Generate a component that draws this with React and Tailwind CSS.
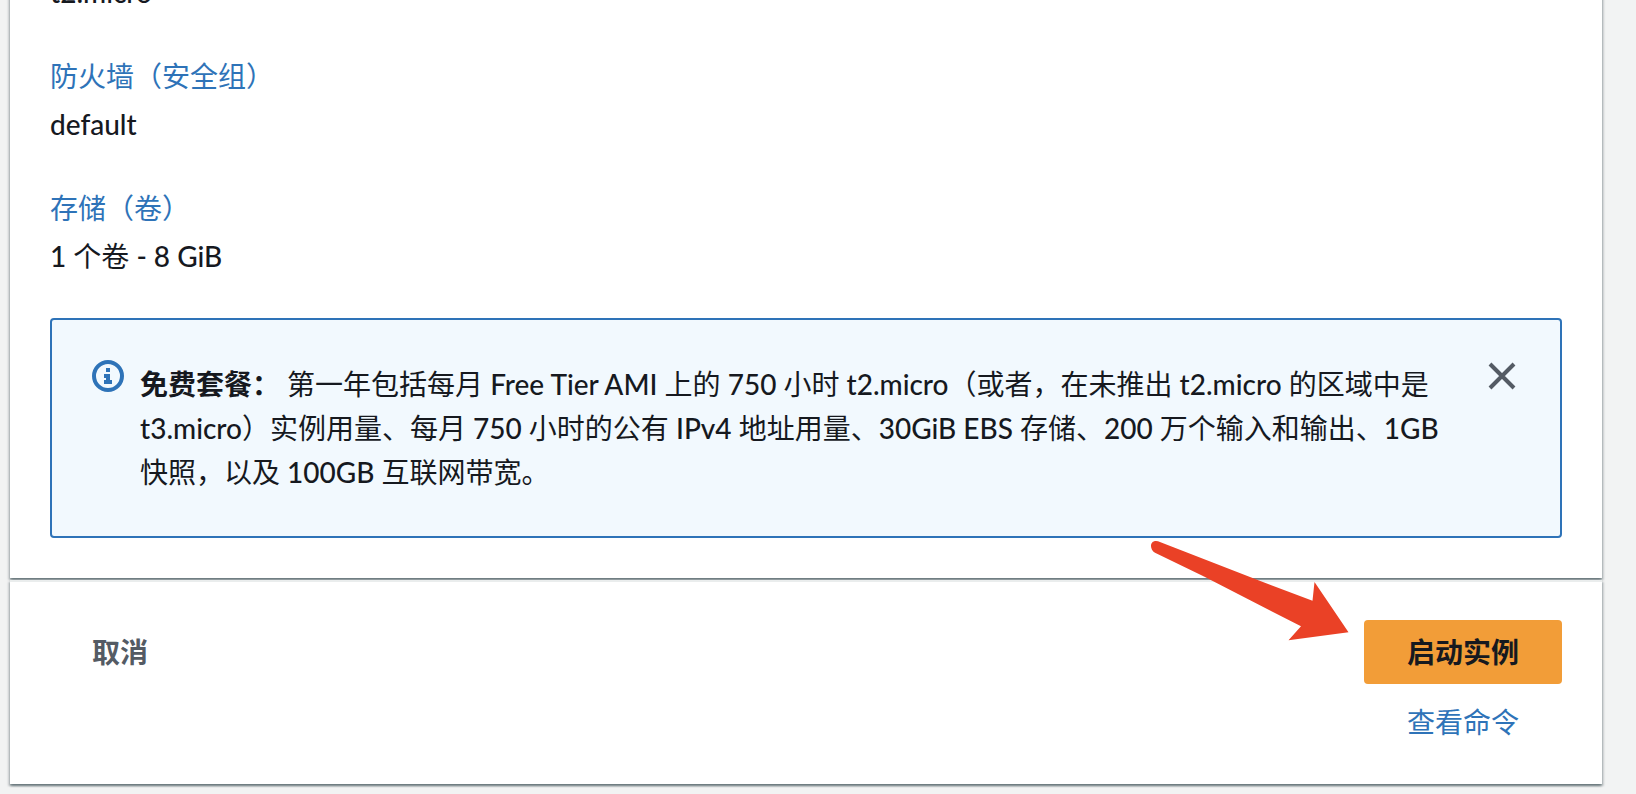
const panelShadow =
  "shadow-[0_2px_2px_0_rgba(0,28,36,0.4),2px_2px_2px_0_rgba(0,28,36,0.15),-2px_2px_2px_0_rgba(0,28,36,0.15)]";

function SummaryItem({ label, value }) {
  return (
    <div className="flex flex-col gap-1">
      <dt>
        <a href="#" className="text-[#2e73b8]">
          {label}
        </a>
      </dt>
      <dd>{value}</dd>
    </div>
  );
}

function InfoIcon() {
  return (
    <svg className="size-8 shrink-0" viewBox="0 0 32 32" fill="none" aria-hidden="true">
      <circle cx="16" cy="16" r="14" stroke="#2e73b8" strokeWidth="4" />
      <path d="M14 8h4v4h-4zM12 14h6v6h2v4h-8v-4h2v-2h-2z" fill="#2e73b8" />
    </svg>
  );
}

function CloseIcon() {
  return (
    <svg className="size-8" viewBox="0 0 32 32" fill="none" aria-hidden="true">
      <path d="M4 4l24 24M28 4L4 28" stroke="#545b64" strokeWidth="4" />
    </svg>
  );
}

function Arrow() {
  return (
    <svg
      className="pointer-events-none absolute -top-[42px] right-[253px] h-[102px] w-[200px]"
      viewBox="0 0 200 102"
      aria-hidden="true"
    >
      <path
        d="M9 1.2L110 40.5L163.5 60.7L165.5 42L199.5 92.3L139.5 100.3L152 86.3L55 36.5L6 12.7C0.5 9.5 0.5 1 7 1Z"
        fill="#ea4126"
      />
    </svg>
  );
}

export default function App() {
  return (
    <div className="min-h-screen overflow-hidden bg-[#f2f3f3] pr-[34px] pl-[10px] font-['Lato_Medium','Lato','Noto_Sans_CJK_SC',sans-serif] text-[28px] leading-[44px] text-[#16191f]">
      <section className={`-mt-[30px] bg-white px-10 pb-10 ${panelShadow}`}>
        <dl className="flex flex-col gap-10">
          <dd>t2.micro</dd>
          <SummaryItem label="防火墙（安全组）" value="default" />
          <SummaryItem label="存储（卷）" value="1 个卷 - 8 GiB" />
        </dl>
        <div
          role="status"
          className="mt-10 flex items-start gap-4 rounded border-2 border-[#2e73b8] bg-[#f2f9fe] p-10"
        >
          <InfoIcon />
          <p className="grow py-0.5">
            <strong className="font-bold">免费套餐：</strong> 第一年包括每月 Free Tier AMI 上的 750
            小时 t2.micro（或者，在未推出 t2.micro 的区域中是 t3.micro）实例用量、每月 750
            小时的公有 IPv4 地址用量、30GiB EBS 存储、200 万个输入和输出、1GB 快照，以及 100GB
            互联网带宽。
          </p>
          <button type="button" aria-label="关闭" className="mr-0.5 ml-4 shrink-0">
            <CloseIcon />
          </button>
        </div>
      </section>

      <footer
        className={`relative mt-0.5 flex items-start justify-between border-t-2 border-[#eaeded] bg-white px-10 pt-[38px] pb-10 ${panelShadow}`}
      >
        <Arrow />
        <button type="button" className="h-16 px-[42px] font-bold text-[#545b64]">
          取消
        </button>
        <div className="flex flex-col items-center gap-4">
          <button type="button" className="h-16 rounded bg-[#f29d38] px-[43px] font-bold">
            启动实例
          </button>
          <a href="#" className="text-[#2e73b8]">
            查看命令
          </a>
        </div>
      </footer>
    </div>
  );
}
